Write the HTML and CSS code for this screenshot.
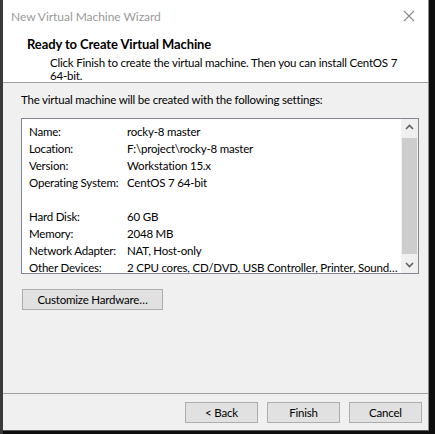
FILE: index.html
```html
<!DOCTYPE html>
<html>
<head>
<meta charset="utf-8">
<link rel="stylesheet" href="styles.css">
</head>
<body>
<div class="window">
  <div class="titlebar">
    <span class="title">New Virtual Machine Wizard</span>
    <svg class="close" width="12" height="12" viewBox="0 0 12 12"><path d="M1 1L11 11M11 1L1 11" stroke="#8a8a8a" stroke-width="1.1" fill="none"/></svg>
  </div>
  <div class="header">
    <div class="h-title">Ready to Create Virtual Machine</div>
    <div class="h-sub">Click Finish to create the virtual machine. Then you can install CentOS 7 64-bit.</div>
  </div>
  <div class="content">
    <div class="intro">The virtual machine will be created with the following settings:</div>
    <div class="listbox">
      <div class="rows">
        <div class="row"><span class="lbl">Name:</span><span>rocky-8 master</span></div>
        <div class="row"><span class="lbl">Location:</span><span>F:\project\rocky-8 master</span></div>
        <div class="row"><span class="lbl">Version:</span><span>Workstation 15.x</span></div>
        <div class="row"><span class="lbl">Operating System:</span><span>CentOS 7 64-bit</span></div>
        <div class="row"><span class="lbl"></span><span></span></div>
        <div class="row"><span class="lbl">Hard Disk:</span><span>60 GB</span></div>
        <div class="row"><span class="lbl">Memory:</span><span>2048 MB</span></div>
        <div class="row"><span class="lbl">Network Adapter:</span><span>NAT, Host-only</span></div>
        <div class="row"><span class="lbl">Other Devices:</span><span>2 CPU cores, CD/DVD, USB Controller, Printer, Sound…</span></div>
      </div>
      <div class="scrollbar">
        <svg class="arrow" width="17" height="17" viewBox="0 0 17 17"><path d="M5 10L8.5 6.5L12 10" stroke="#606060" stroke-width="1.6" fill="none"/></svg>
        <div class="thumb"></div>
        <svg class="arrow" width="17" height="17" viewBox="0 0 17 17"><path d="M5 7L8.5 10.5L12 7" stroke="#606060" stroke-width="1.6" fill="none"/></svg>
      </div>
    </div>
    <button class="btn custom">Customize Hardware…</button>
  </div>
  <div class="footer">
    <button class="btn nav">&lt; Back</button>
    <button class="btn nav">Finish</button>
    <button class="btn nav">Cancel</button>
  </div>
</div>
</body>
</html>
```
FILE: styles.css
```css
* { box-sizing: border-box; }
html, body { margin: 0; padding: 0; }
body {
  width: 435px;
  height: 434px;
  background: #0e0e0e;
  font-family: Lato, "Noto Sans", sans-serif;
  font-size: 11.5px;
  letter-spacing: -0.2px;
  color: #000;
  overflow: hidden;
  border-left: 3px solid #3a3a3a;
}
.window {
  width: 426px;
  height: 431px;
  background: #f0f0f0;
  border-right: 1px solid #8c8c8c;
  border-bottom: 1px solid #5a5a5a;
  display: flex;
  flex-direction: column;
}
.titlebar {
  height: 32px;
  flex: none;
  background: #fff;
  display: flex;
  align-items: center;
  justify-content: space-between;
  padding: 0 13px 0 8px;
}
.title { color: #9a9a9a; font-size: 12px; letter-spacing: -0.05px; }
.close { display: block; }
.header {
  height: 51px;
  flex: none;
  background: #fff;
  border-bottom: 1px solid #a0a0a0;
  padding: 4px 0 0 24px;
}
.h-title { font-weight: bold; font-size: 13px; letter-spacing: -0.1px; line-height: 17px; }
.h-sub { padding-left: 23px; line-height: 13px; width: 375px; margin-top: 3px; }
.content {
  flex: 1;
  padding: 10px 0 0 18px;
  border-bottom: 1px solid #a0a0a0;
}
.intro { line-height: 14px; }
.listbox {
  margin-top: 11px;
  width: 398px;
  height: 156px;
  background: #fff;
  border: 1px solid #828790;
  display: flex;
}
.rows { flex: 1; min-width: 0; overflow: hidden; padding: 4px 0 0 7px; }
.row { display: flex; height: 17px; line-height: 17px; white-space: nowrap; }
.lbl { width: 98px; flex: none; }
.scrollbar {
  width: 17px;
  flex: none;
  background: #f0f0f0;
  display: flex;
  flex-direction: column;
}
.arrow { display: block; flex: none; }
.thumb { flex: 1; background: #cdcdcd; margin: 2px 1px; }
.btn {
  font: inherit;
  letter-spacing: inherit;
  background: #e1e1e1;
  border: 1px solid #adadad;
  padding: 0;
  color: #000;
}
.custom { margin-top: 15px; width: 141px; height: 21px; margin-left: 1px; display: block; }
.footer {
  height: 36px;
  flex: none;
  display: flex;
  justify-content: flex-end;
  gap: 9px;
  padding: 8px 6px 0 0;
}
.nav { width: 73px; height: 21px; }
```
